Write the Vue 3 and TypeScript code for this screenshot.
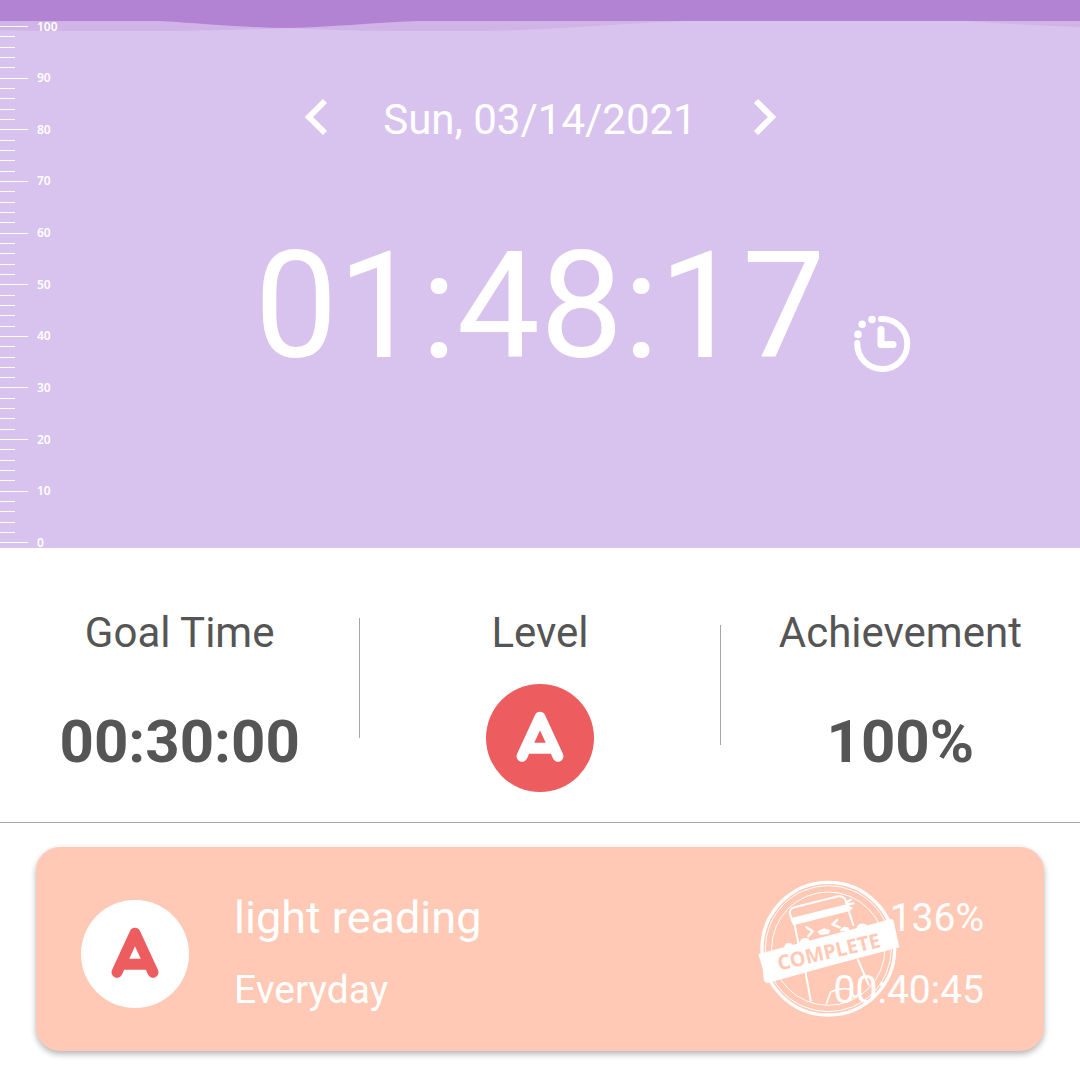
<script setup lang="ts">
interface Tick {
  value: number
  major: boolean
}

const ticks: Tick[] = Array.from({ length: 51 }, (_, i) => {
  const value = 100 - i * 2
  return { value, major: value % 10 === 0 }
})

const day = 'Sun, 03/14/2021'
const elapsed = '01:48:17'
const goalTime = '00:30:00'
const achievement = '100%'

const task = {
  title: 'light reading',
  repeat: 'Everyday',
  percent: '136%',
  time: '00:40:45',
}
</script>

<template>
  <main class="screen">
    <section class="hero">
      <svg class="wave" viewBox="0 0 1080 10" preserveAspectRatio="none" aria-hidden="true">
        <path class="wave-back" d="M0 0V9Q30 10 70 10H170Q240 9 290 7Q340 10 400 10H480C560 9 620 2 690 0ZM965 0Q1020 4 1080 6V0Z" />
        <path class="wave-front" d="M0 0H160C210 3 250 7 290 7C330 6 370 2 418 0Z" />
      </svg>

      <ol class="ruler">
        <li v-for="tick in ticks" :key="tick.value" class="tick" :class="{ major: tick.major }">
          <span v-if="tick.major" class="tick-label">{{ tick.value }}</span>
        </li>
      </ol>

      <div class="hero-body">
        <nav class="date-nav">
          <button type="button" class="icon-button" aria-label="Previous day">
            <svg width="48" height="48" viewBox="0 0 48 48"><path class="chevron" d="M33 5L17 21L33 37" /></svg>
          </button>
          <span class="date">{{ day }}</span>
          <button type="button" class="icon-button" aria-label="Next day">
            <svg width="48" height="48" viewBox="0 0 48 48"><path class="chevron" d="M16 5L32 21L16 37" /></svg>
          </button>
        </nav>

        <div class="timer">
          <span class="timer-value">{{ elapsed }}</span>
          <button type="button" class="icon-button history" aria-label="Time log">
            <svg width="60" height="60" viewBox="0 0 60 60">
              <path class="clock-ring" d="M29 5A25 25 0 1 1 5.3 29" />
              <path class="clock-hand" d="M29 15.5V30.5H41" />
              <circle class="clock-dot" cx="20" cy="5.5" r="3.8" />
              <circle class="clock-dot" cx="10.2" cy="10.3" r="3.8" />
              <circle class="clock-dot" cx="6" cy="20.4" r="3.8" />
            </svg>
          </button>
        </div>
      </div>
    </section>

    <section class="stats">
      <div class="stat">
        <h2 class="stat-label">Goal Time</h2>
        <p class="stat-value">{{ goalTime }}</p>
      </div>
      <span class="divider"></span>
      <div class="stat">
        <h2 class="stat-label">Level</h2>
        <svg class="grade" width="108" height="108" viewBox="0 0 108 108" role="img" aria-label="Level A">
          <circle class="fill-red" cx="54" cy="54" r="54" />
          <path class="mark stroke-white" d="M36 72.3L54 33.2L72 72.3M41 64.2H67" />
        </svg>
      </div>
      <span class="divider low"></span>
      <div class="stat">
        <h2 class="stat-label">Achievement</h2>
        <p class="stat-value">{{ achievement }}</p>
      </div>
    </section>

    <section class="tasks">
      <article class="card">
        <svg class="grade" width="108" height="108" viewBox="0 0 108 108" role="img" aria-label="Level A">
          <circle class="fill-white" cx="54" cy="54" r="54" />
          <path class="mark stroke-red" d="M36 72.3L54 33.2L72 72.3M41 64.2H67" />
        </svg>

        <div class="task-text">
          <h3 class="task-title">{{ task.title }}</h3>
          <p class="task-line">{{ task.repeat }}</p>
        </div>

        <svg class="stamp" width="150" height="145" viewBox="45 45 450 435" role="img" aria-label="Complete">
          <g class="ink">
            <circle cx="265" cy="266" r="199" stroke-width="10" />
            <circle cx="265" cy="266" r="189" stroke-width="3" />
            <circle cx="265" cy="266" r="170" stroke-width="3" />
            <path stroke-width="6" d="M160 190L150 162Q147 147 163 142L295 109Q312 108 317 122L325 146" />
            <path stroke-width="6" d="M163 190L176 255M325 150L340 195M196 335L212 422M354 300L386 374" />
            <path stroke-width="7" d="M199 202L218 214L205 229M292 180L277 193L299 202" />
            <path stroke-width="5" d="M260 430L272 396Q298 383 327 387Q337 395 342 412L362 400" />
            <path stroke-width="7" d="M318 128L332 119M321 133L340 130M322 138L334 145" />
          </g>
          <path class="fill-white" d="M151 175L326 131L332 152L160 196Z" />
          <path class="fill-white" d="M232 214L252 205L271 211L266 222L240 225ZM132 262Q136 244 156 251L164 264ZM177 250Q184 229 206 236L210 250L180 260ZM299 214Q306 195 325 202L330 214ZM348 206Q356 185 376 192L386 202Z" />
          <path class="fill-white" d="M55 282L250 231L454 177L460 180L471 229L478 262L270 317L80 370L72 362L68 327Z" />
          <text class="stamp-text" x="271" y="296" transform="rotate(-13 271 296)">COMPLETE</text>
        </svg>

        <div class="task-result">
          <p class="task-line">{{ task.percent }}</p>
          <p class="task-line">{{ task.time }}</p>
        </div>
      </article>
    </section>
  </main>
</template>

<style>
body {
  margin: 0;
  background: #fff;
}
</style>

<style scoped>
.screen {
  font-family: Roboto, "Liberation Sans", sans-serif;
  color: #555;
}

h2,
h3,
p,
ol {
  margin: 0;
  padding: 0;
  font-weight: 400;
}

.hero {
  position: relative;
  border-top: 21px solid #b283d3;
  background: #d8c3ef;
  color: #fff;
}

.wave {
  position: absolute;
  top: 0;
  left: 0;
  width: 100%;
  height: 10px;
}

.wave-back {
  fill: #d0b4e7;
}

.wave-front {
  fill: #b283d3;
}

.ruler {
  position: absolute;
  top: 5px;
  bottom: 4px;
  left: 0;
  display: flex;
  flex-direction: column;
  justify-content: space-between;
  list-style: none;
}

.tick {
  display: flex;
  align-items: center;
  gap: 9px;
  height: 1px;
}

.tick::before {
  content: "";
  width: 15px;
  height: 1px;
  background: #fff;
}

.tick.major::before {
  width: 28px;
}

.tick-label {
  font: 600 12px/12px "Noto Sans", sans-serif;
}

.hero-body {
  display: flex;
  flex-direction: column;
  align-items: center;
  padding: 71px 0 151px;
}

.date-nav {
  display: flex;
  align-items: center;
  gap: 43px;
  height: 56px;
}

.date {
  font-size: 42px;
  line-height: 56px;
}

.icon-button {
  display: block;
  padding: 0;
  border: 0;
  background: none;
  line-height: 0;
  cursor: pointer;
}

.chevron {
  fill: none;
  stroke: #fff;
  stroke-width: 6;
}

.timer {
  position: relative;
  margin-top: 69px;
}

.timer-value {
  display: block;
  font-size: 148px;
  line-height: 180px;
}

.history {
  position: absolute;
  left: 100%;
  bottom: 23px;
  margin-left: 27px;
}

.clock-ring,
.clock-hand {
  fill: none;
  stroke: #fff;
  stroke-width: 6;
  stroke-linecap: round;
  stroke-linejoin: round;
}

.clock-hand {
  stroke-width: 7;
}

.clock-dot {
  fill: #fff;
}

.stats {
  display: flex;
  padding: 59px 0 30px;
  border-bottom: 1px solid #a6a6a6;
}

.stat {
  flex: 1 1 0;
  display: flex;
  flex-direction: column;
  align-items: center;
}

.stat-label {
  margin-bottom: 25px;
  font-size: 42px;
  line-height: 52px;
}

.stat-value {
  font-size: 60px;
  font-weight: 700;
  line-height: 116px;
  height: 108px;
}

.divider {
  width: 1px;
  height: 120px;
  margin-top: 11px;
  background: #a6a6a6;
}

.divider.low {
  margin-top: 18px;
}

.grade {
  display: block;
  flex: none;
}

.mark {
  fill: none;
  stroke-width: 11;
  stroke-linecap: round;
  stroke-linejoin: round;
}

.stroke-white {
  stroke: #fff;
}

.stroke-red {
  stroke: #ed5c5e;
}

.fill-white {
  fill: #fff;
}

.fill-red {
  fill: #ed5c5e;
}

.tasks {
  padding: 24px 36px 28px;
}

.card {
  position: relative;
  display: flex;
  align-items: center;
  padding: 35px 60px 25px 45px;
  border-radius: 24px;
  background: #ffc9b5;
  box-shadow: 0 3px 6px rgba(0, 0, 0, 0.3);
  color: #fff;
}

.task-text {
  flex: 1;
  margin-left: 45px;
}

.task-title {
  font-size: 45px;
  line-height: 72px;
}

.task-line {
  font-size: 39px;
  line-height: 72px;
}

.task-result {
  position: relative;
  text-align: right;
}

.stamp {
  position: absolute;
  top: 28px;
  right: 139px;
}

.ink {
  fill: none;
  stroke: #fff;
  stroke-linecap: round;
  stroke-linejoin: round;
}

.stamp-text {
  fill: #ffc9b5;
  font: 700 60px "Noto Sans", sans-serif;
  text-anchor: middle;
}
</style>
